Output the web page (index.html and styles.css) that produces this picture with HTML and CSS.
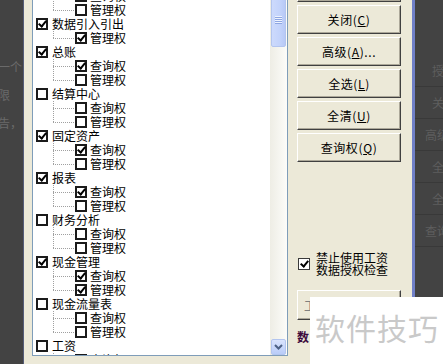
FILE: index.html
```html
<!DOCTYPE html>
<html lang="zh-CN">
<head>
    <meta charset="UTF-8">
    <title>权限设置</title>
    <link rel="stylesheet" href="styles.css">
</head>
<body>
<div class="screen">
    <!-- dimmed window behind the dialog -->
    <div class="shade-left">
        <p class="ghost first">一个</p>
        <p class="ghost">限</p>
        <p class="ghost">告，</p>
    </div>

    <div class="dialog">
        <div class="listbox">
            <ul class="tree">
                <li class="node child"><span class="conn"></span><span class="cb"></span>查询权</li>
                <li class="node child"><span class="conn last"></span><span class="cb"></span>管理权</li>
                <li class="node"><span class="cb on"></span>数据引入引出</li>
                <li class="node child"><span class="conn last"></span><span class="cb on"></span>管理权</li>
                <li class="node"><span class="cb on"></span>总账</li>
                <li class="node child"><span class="conn"></span><span class="cb on"></span>查询权</li>
                <li class="node child"><span class="conn last"></span><span class="cb"></span>管理权</li>
                <li class="node"><span class="cb"></span>结算中心</li>
                <li class="node child"><span class="conn"></span><span class="cb"></span>查询权</li>
                <li class="node child"><span class="conn last"></span><span class="cb"></span>管理权</li>
                <li class="node"><span class="cb on"></span>固定资产</li>
                <li class="node child"><span class="conn"></span><span class="cb on"></span>查询权</li>
                <li class="node child"><span class="conn last"></span><span class="cb"></span>管理权</li>
                <li class="node"><span class="cb on"></span>报表</li>
                <li class="node child"><span class="conn"></span><span class="cb on"></span>查询权</li>
                <li class="node child"><span class="conn last"></span><span class="cb"></span>管理权</li>
                <li class="node"><span class="cb"></span>财务分析</li>
                <li class="node child"><span class="conn"></span><span class="cb"></span>查询权</li>
                <li class="node child"><span class="conn last"></span><span class="cb"></span>管理权</li>
                <li class="node"><span class="cb on"></span>现金管理</li>
                <li class="node child"><span class="conn"></span><span class="cb on"></span>查询权</li>
                <li class="node child"><span class="conn last"></span><span class="cb on"></span>管理权</li>
                <li class="node"><span class="cb"></span>现金流量表</li>
                <li class="node child"><span class="conn"></span><span class="cb"></span>查询权</li>
                <li class="node child"><span class="conn last"></span><span class="cb"></span>管理权</li>
                <li class="node"><span class="cb"></span>工资</li>
                <li class="node child"><span class="conn"></span><span class="cb on"></span>查询权</li>
            </ul>
            <div class="vscroll">
                <div class="thumb"><span class="grip"></span></div>
                <div class="track"></div>
                <div class="arrow-down">
                    <svg width="9" height="6" viewBox="0 0 9 6"><path d="M1 1l3.5 3.5L8 1" fill="none" stroke="#4d6185" stroke-width="2"/></svg>
                </div>
            </div>
        </div>

        <div class="side">
            <div class="btns">
                <div class="btn">授权(<u>S</u>)</div>
                <div class="btn">关闭(<u>C</u>)</div>
                <div class="btn">高级(<u>A</u>)...</div>
                <div class="btn">全选(<u>L</u>)</div>
                <div class="btn">全清(<u>U</u>)</div>
                <div class="btn">查询权(<u>Q</u>)</div>
            </div>
            <label class="opt">
                <span class="box on"></span>
                <span>禁止使用工资<br>数据授权检查</span>
            </label>
            <div class="btn plain">工</div>
            <div class="group-title">数</div>
        </div>
    </div>

    <div class="shade-right">
        <div class="ghost-row">授权</div>
        <div class="ghost-row">关闭</div>
        <div class="ghost-row wide">高级</div>
        <div class="ghost-row">全选</div>
        <div class="ghost-row">全清</div>
        <div class="ghost-row wide">查询权</div>
    </div>

    <div class="watermark">软件技巧</div>
</div>
</body>
</html>
```

FILE: styles.css
```css
* {
    box-sizing: border-box;
}
body {
    margin: 0;
    font-family: "Noto Sans CJK SC", "Liberation Sans", sans-serif;
    font-size: 12px;
    color: #000;
    background: #434343;
}
.screen {
    position: relative;
    display: flex;
    width: 443px;
    height: 364px;
    overflow: hidden;
}

/* dimmed background */
.shade-left {
    width: 24px;
    flex: none;
    background: #434343;
    border-right: 1px solid #565d78;
    overflow: hidden;
}
.ghost {
    margin: 14px 0 0 -2px;
    line-height: 14px;
    color: #6a6a6a;
    white-space: nowrap;
}
.ghost.first {
    margin-top: 60px;
}
.shade-right {
    flex: 1;
    background: #434343;
    padding-top: 55px;
    overflow: hidden;
}
.ghost-row {
    height: 32px;
    line-height: 31px;
    border-bottom: 1px solid #393939;
    padding-left: 17px;
    color: #5e5e5e;
    white-space: nowrap;
}
.ghost-row.wide {
    padding-left: 10px;
}

/* dialog */
.dialog {
    flex: none;
    width: 391px;
    display: flex;
    background: #ece9d8;
    border-right: 3px solid #7080c8;
    padding-left: 8px;
}
.listbox {
    width: 256px;
    height: 356px;
    display: flex;
    background: #fff;
    border: 1px solid #7f9db9;
    border-top: 0;
    overflow: hidden;
}
.tree {
    flex: 1;
    margin: -11px 0 0;
    padding: 0;
    list-style: none;
    overflow: hidden;
}
.node {
    display: flex;
    align-items: center;
    height: 14px;
    line-height: 14px;
    padding-left: 3px;
    white-space: nowrap;
}
.node.child {
    padding-left: 20px;
}
.conn {
    flex: none;
    width: 22px;
    height: 14px;
    background:
        repeating-linear-gradient(to bottom, #a0a0a0 0 1px, transparent 1px 2px) left top / 1px 100% no-repeat,
        repeating-linear-gradient(to right, #a0a0a0 0 1px, transparent 1px 2px) left 7px / 100% 1px no-repeat;
}
.conn.last {
    background-size: 1px 7px, 100% 1px;
}
.cb {
    flex: none;
    width: 12px;
    height: 12px;
    margin-right: 4px;
    border: 2px solid #1b1b1b;
    background: #fff;
}
.child .cb {
    margin-right: 3px;
}
.cb.on::after,
.box.on::after {
    content: "";
    display: block;
    width: 3px;
    height: 6px;
    border: solid #000;
    border-width: 0 2px 2px 0;
    transform: translate(2px, -1px) rotate(40deg);
}

/* scrollbar */
.vscroll {
    flex: none;
    width: 17px;
    display: flex;
    flex-direction: column;
    background: linear-gradient(to right, #eeede5, #fcfcf9);
}
.thumb {
    height: 57px;
    margin: -10px 1px 0;
    display: flex;
    align-items: center;
    justify-content: center;
    border: 1px solid #b3c5ef;
    border-radius: 2px;
    background: linear-gradient(to right, #cddafc, #c3d3fb 60%, #b8c9f6);
}
.grip {
    width: 7px;
    height: 8px;
    margin-top: 2px;
    background: repeating-linear-gradient(to bottom, #eef3fe 0 1px, #8ea6e2 1px 2px);
}
.track {
    flex: 1;
}
.arrow-down {
    height: 16px;
    margin: 0 1px;
    display: flex;
    align-items: center;
    justify-content: center;
    border: 1px solid #b3c5ef;
    border-radius: 2px;
    background: linear-gradient(#dae4fd, #b9ccf8);
}

/* buttons column */
.side {
    flex: none;
    width: 104px;
    margin-left: 9px;
    display: flex;
    flex-direction: column;
}
.btns {
    display: flex;
    flex-direction: column;
    gap: 3px;
    margin-top: -27px;
}
.btn {
    height: 29px;
    display: flex;
    align-items: center;
    justify-content: center;
    background: #ece9d8;
    border: 1px solid;
    border-color: #fff #404040 #404040 #fff;
    box-shadow: inset -1px -1px 0 #aca899;
    letter-spacing: 0.6px;
    white-space: nowrap;
}
.btn.plain {
    height: 30px;
    margin-top: 14px;
    justify-content: flex-start;
    padding-left: 6px;
    color: #808080;
}
.opt {
    margin-top: 90px;
    display: flex;
    align-items: center;
    gap: 6px;
    padding-left: 1px;
    line-height: 12px;
}
.box {
    flex: none;
    width: 12px;
    height: 12px;
    border: 1px solid #3a3a3a;
    background: #fff;
}
.box.on::after {
    transform: translate(3px, 0) rotate(40deg);
}
.group-title {
    margin-top: 10px;
    line-height: 14px;
    font-weight: bold;
    color: #3c0a3c;
    white-space: nowrap;
}

/* watermark pasted over the screenshot */
.watermark {
    position: absolute;
    left: 310px;
    top: 297px;
    right: 0;
    bottom: 0;
    padding: 15px 0 0 5px;
    background: #fff;
    color: #c9c9c9;
    font-size: 30px;
    line-height: 1;
    letter-spacing: 1px;
    white-space: nowrap;
}
```
